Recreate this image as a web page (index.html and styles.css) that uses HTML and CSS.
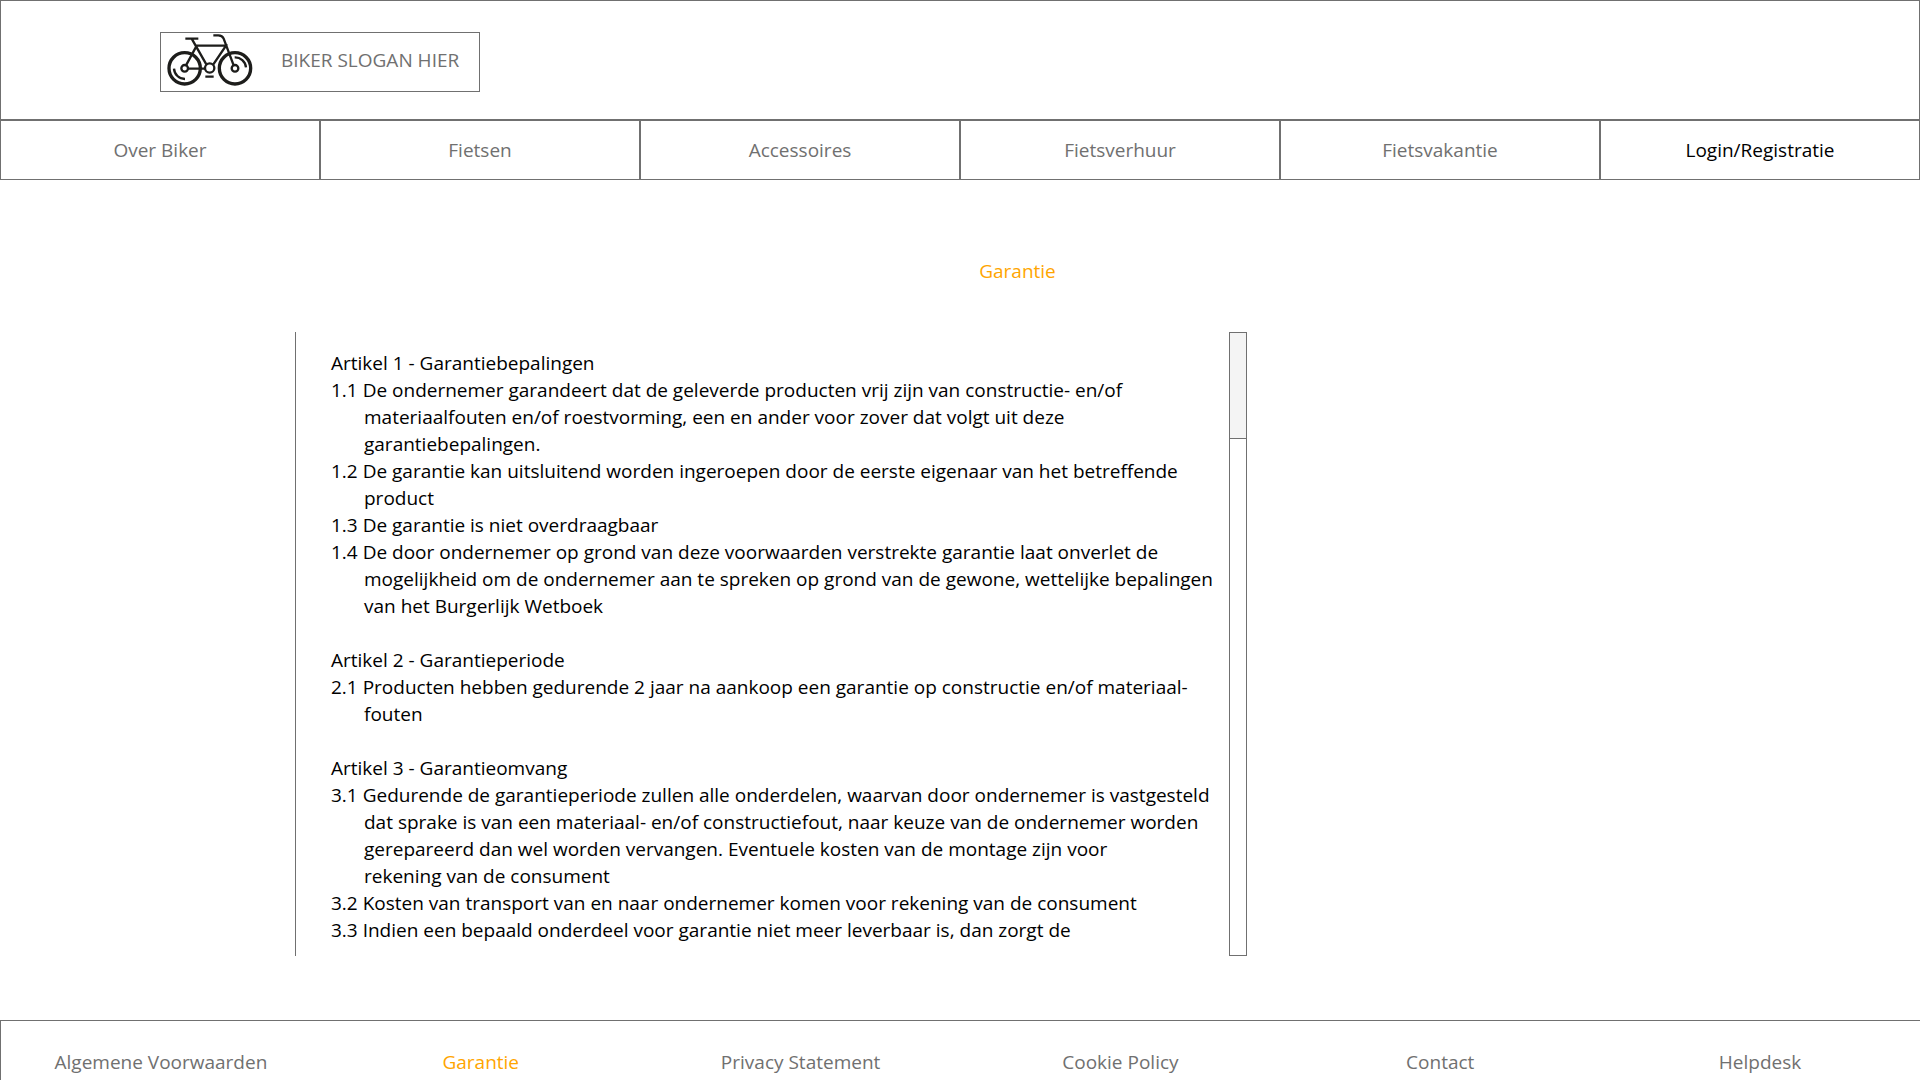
FILE: index.html
```html
<!DOCTYPE html>
<html lang="nl">
<head>
<meta charset="utf-8">
<meta name="viewport" content="width=device-width, initial-scale=1">
<title>Biker - Garantie</title>
<link rel="stylesheet" href="styles.css">
</head>
<body>
<header class="header">
  <a class="logo" href="#">
    <svg class="logo-bike" viewBox="50 43 258 156" aria-hidden="true">
      <g fill="none" stroke="#1d1d1b" stroke-width="7">
        <circle cx="103" cy="146" r="47" stroke-width="10"/>
        <circle cx="254" cy="146" r="47" stroke-width="10"/>
        <circle cx="103" cy="146" r="10"/>
        <circle cx="254" cy="146" r="10"/>
        <circle cx="178" cy="145" r="14"/>
        <path d="M105 57H144M124 57L168 134M107 137L139 78H227L189 134M113 147H164M189 47H204Q216 47 220 57L250 137"/>
        <path d="M165 171H190M71 147A33 33 0 0 0 104 178M253 113A33 33 0 0 1 287 143"/>
      </g>
    </svg>
    <span>BIKER SLOGAN HIER</span>
  </a>
</header>
<nav class="nav" aria-label="Hoofdmenu">
  <a href="#">Over Biker</a>
  <a href="#">Fietsen</a>
  <a href="#">Accessoires</a>
  <a href="#">Fietsverhuur</a>
  <a href="#">Fietsvakantie</a>
  <a class="login" href="#">Login/Registratie</a>
</nav>
<main class="main">
  <h1 class="title">Garantie</h1>
  <div class="content">
    <div class="panel">
      <div class="terms">
        <section>
          <h2>Artikel 1 - Garantiebepalingen</h2>
          <p>1.1 De ondernemer garandeert dat de geleverde producten vrij zijn van constructie- en/of<br>materiaalfouten en/of roestvorming, een en ander voor zover dat volgt uit deze<br>garantiebepalingen.</p>
          <p>1.2 De garantie kan uitsluitend worden ingeroepen door de eerste eigenaar van het betreffende<br>product</p>
          <p>1.3 De garantie is niet overdraagbaar</p>
          <p>1.4 De door ondernemer op grond van deze voorwaarden verstrekte garantie laat onverlet de<br>mogelijkheid om de ondernemer aan te spreken op grond van de gewone, wettelijke bepalingen<br>van het Burgerlijk Wetboek</p>
        </section>
        <section>
          <h2>Artikel 2 - Garantieperiode</h2>
          <p>2.1 Producten hebben gedurende 2 jaar na aankoop een garantie op constructie en/of materiaal-<br>fouten</p>
        </section>
        <section>
          <h2>Artikel 3 - Garantieomvang</h2>
          <p>3.1 Gedurende de garantieperiode zullen alle onderdelen, waarvan door ondernemer is vastgesteld<br>dat sprake is van een materiaal- en/of constructiefout, naar keuze van de ondernemer worden<br>gerepareerd dan wel worden vervangen. Eventuele kosten van de montage zijn voor<br>rekening van de consument</p>
          <p>3.2 Kosten van transport van en naar ondernemer komen voor rekening van de consument</p>
          <p>3.3 Indien een bepaald onderdeel voor garantie niet meer leverbaar is, dan zorgt de</p>
        </section>
      </div>
      <div class="scrollbar"><div class="thumb"></div></div>
    </div>
  </div>
</main>
<footer class="footer">
  <a href="#">Algemene Voorwaarden</a>
  <a class="active" href="#">Garantie</a>
  <a href="#">Privacy Statement</a>
  <a href="#">Cookie Policy</a>
  <a href="#">Contact</a>
  <a href="#">Helpdesk</a>
</footer>
</body>
</html>
```
FILE: styles.css
```css
* { box-sizing: border-box; }

body {
  margin: 0;
  background: #fff;
  color: #000;
  font: 19px/27px "Open Sans", "Noto Sans", sans-serif;
}

a { color: #707070; text-decoration: none; }

.header {
  display: flex;
  padding: 31px 159px 27px;
  border: 1px solid #707070;
}

.logo {
  display: flex;
  align-items: center;
  gap: 28px;
  width: 320px;
  height: 60px;
  padding: 0 6px 4px;
  border: 1px solid #707070;
}

.logo-bike { width: 86px; height: 52px; }

.nav {
  display: grid;
  grid-template-columns: repeat(6, 1fr);
  text-align: center;
}

.nav a { padding: 16px 0 15px; border: 1px solid #707070; }
.nav .login { color: #000; }

.main { padding: 78px 0 64px; }

.title {
  margin: 0 0 47px 51%;
  color: #ffa500;
  font-size: 19px;
  font-weight: 400;
}

.content {
  display: grid;
  grid-template-columns: 295fr 952fr 673fr;
}

.panel {
  grid-column: 2;
  display: flex;
  justify-content: space-between;
  border-left: 1px solid #707070;
}

.terms { padding: 18px 0 12px 35px; white-space: nowrap; }
.terms section + section { margin-top: 27px; }
.terms h2 { margin: 0; font-size: 19px; font-weight: 400; }
.terms p { margin: 0 0 0 33px; text-indent: -33px; }

.scrollbar { width: 18px; border: 1px solid #707070; }
.thumb { height: 106px; background: #f4f4f4; border-bottom: 1px solid #707070; }

.footer {
  display: grid;
  grid-template-columns: repeat(6, 1fr);
  padding: 28px 0 4px;
  border-top: 1px solid #707070;
  border-left: 1px solid #707070;
  text-align: center;
}

.footer .active { color: #ffa500; }
```
